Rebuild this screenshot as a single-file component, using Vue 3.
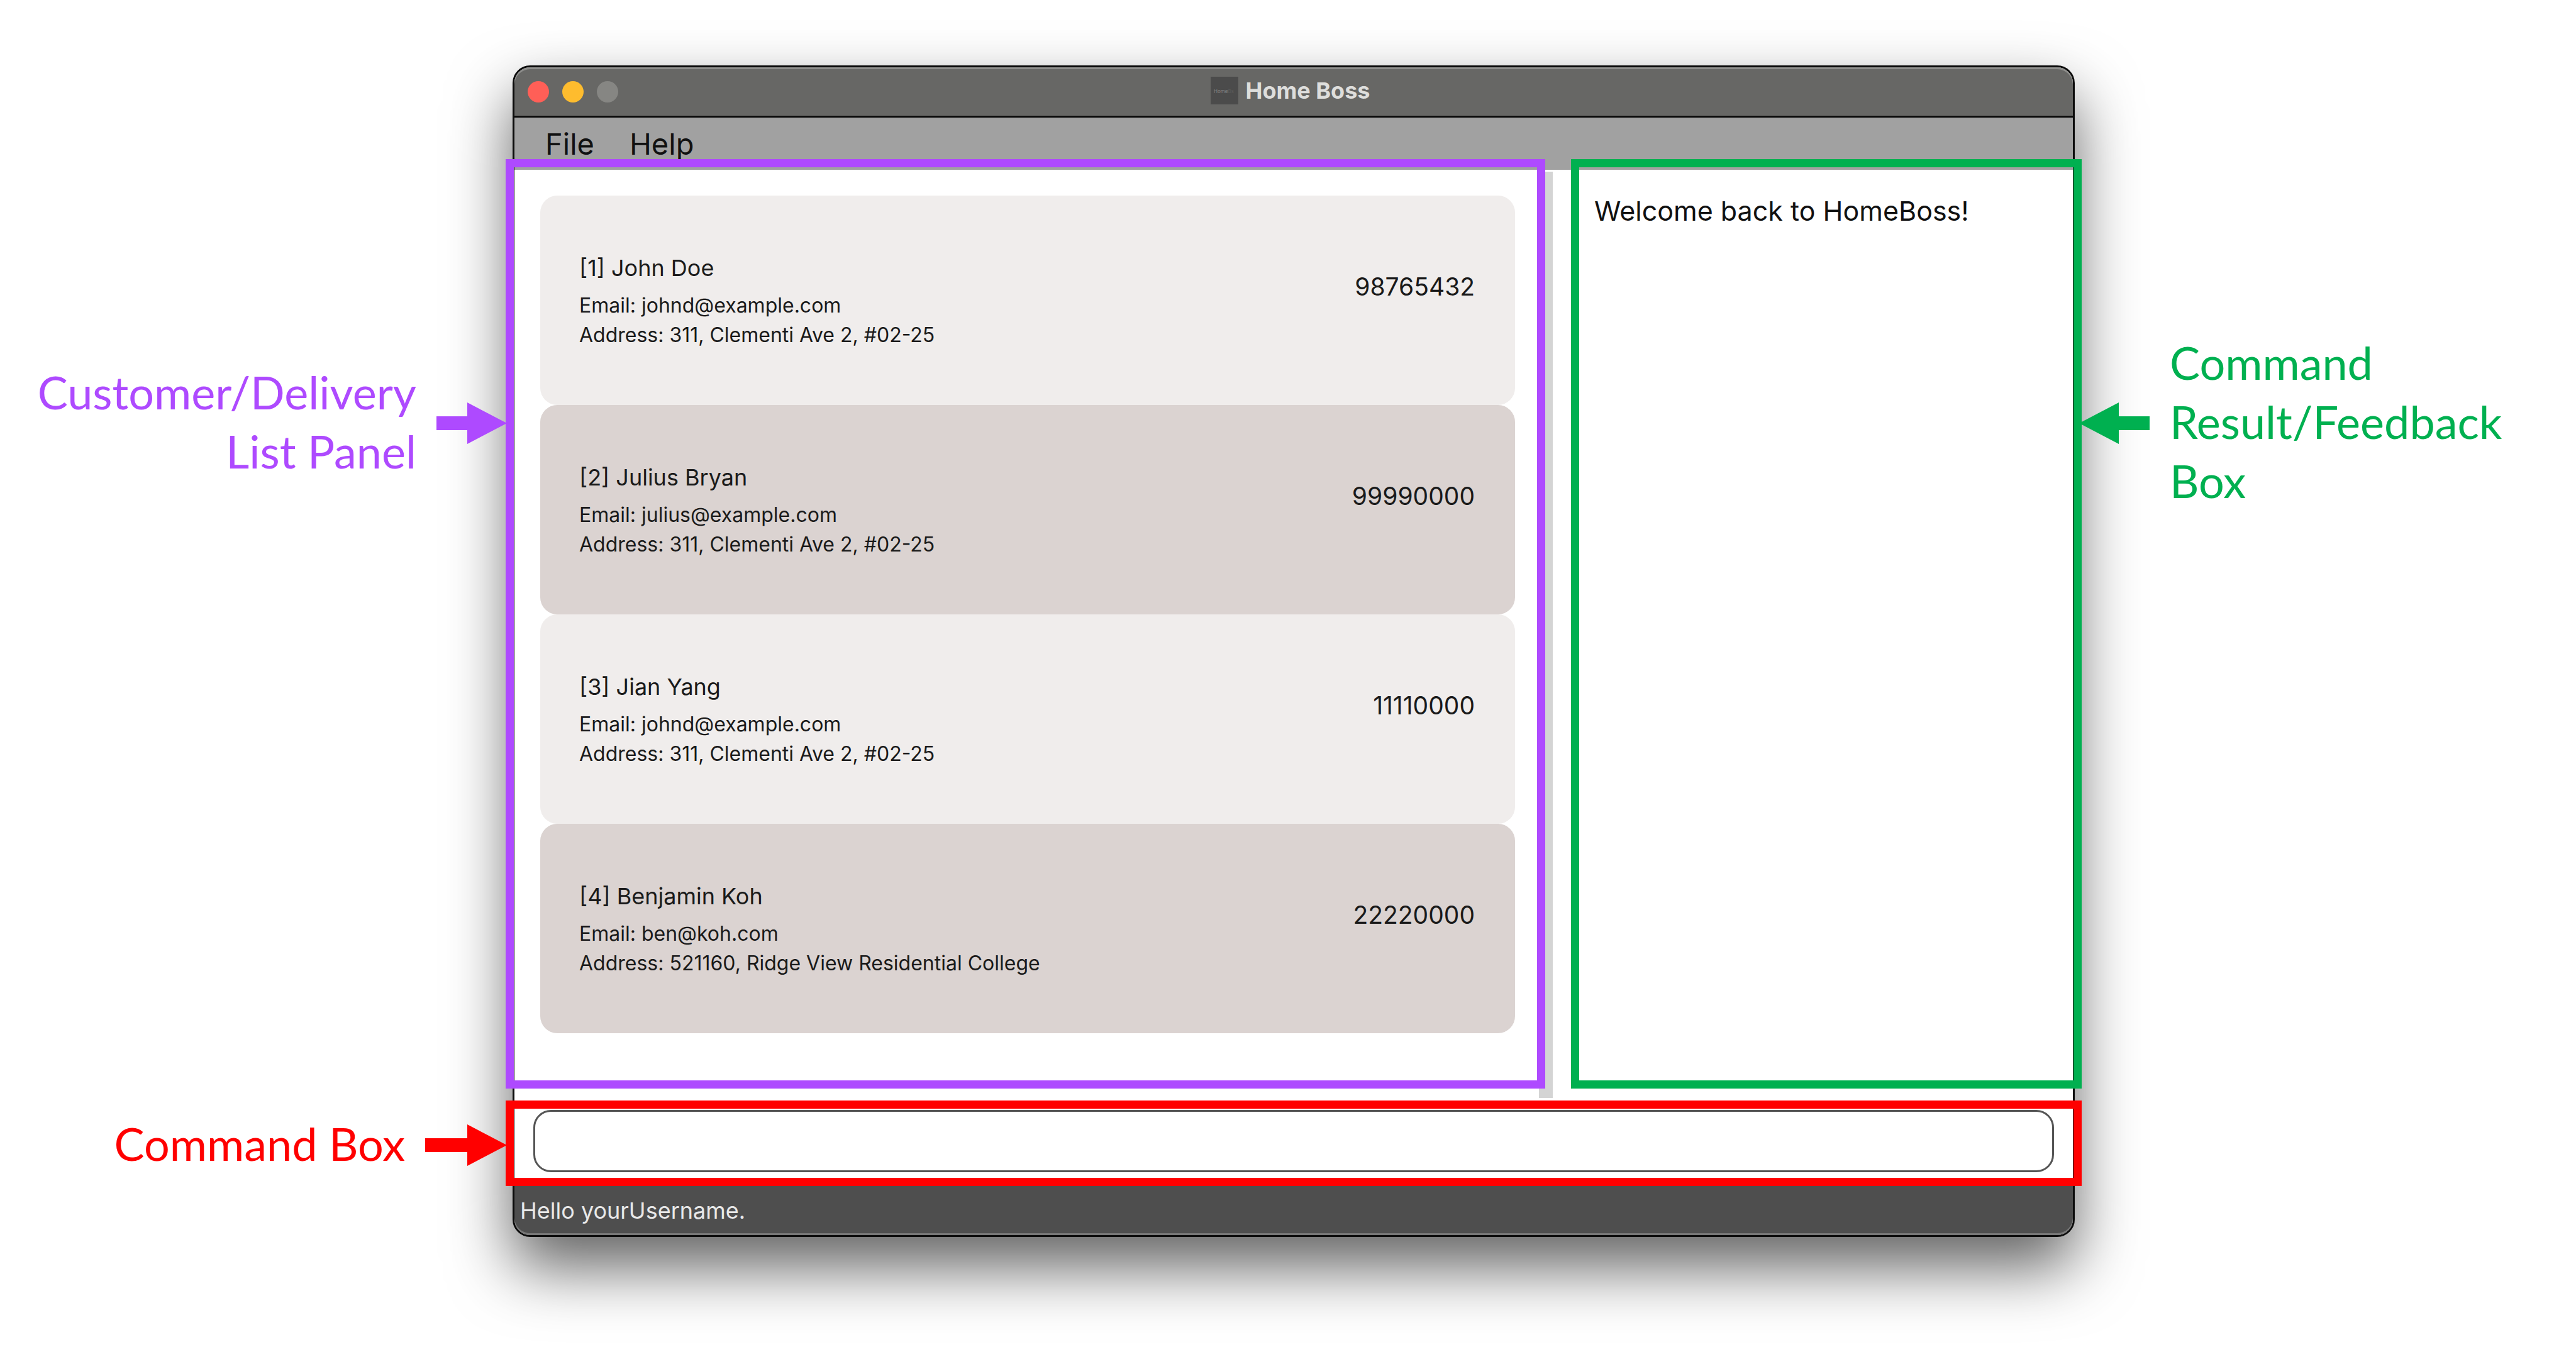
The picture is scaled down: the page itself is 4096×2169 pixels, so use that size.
<script setup>
import { ref } from 'vue'

const command = ref('')
const menus = ['File', 'Help']
const customers = [
  { id: 1, name: 'John Doe', email: 'johnd@example.com', address: '311, Clementi Ave 2, #02-25', phone: '98765432' },
  { id: 2, name: 'Julius Bryan', email: 'julius@example.com', address: '311, Clementi Ave 2, #02-25', phone: '99990000' },
  { id: 3, name: 'Jian Yang', email: 'johnd@example.com', address: '311, Clementi Ave 2, #02-25', phone: '11110000' },
  { id: 4, name: 'Benjamin Koh', email: 'ben@koh.com', address: '521160, Ridge View Residential College', phone: '22220000' }
]
</script>

<template>
  <div class="page">
    <aside class="notes notes-left">
      <div class="note purple">
        <p>Customer/Delivery<br>List Panel</p>
        <svg width="112" height="66" viewBox="0 0 112 66" aria-hidden="true">
          <path d="M0 22H49V0L112 33L49 66V44H0Z" fill="currentColor" />
        </svg>
      </div>
      <div class="note red">
        <p>Command Box</p>
        <svg width="130" height="66" viewBox="0 0 130 66" aria-hidden="true">
          <path d="M0 22H67V0L130 33L67 66V44H0Z" fill="currentColor" />
        </svg>
      </div>
    </aside>

    <main class="window">
      <header class="titlebar">
        <div class="lights">
          <button class="light close" type="button" aria-label="Close"></button>
          <button class="light minimise" type="button" aria-label="Minimise"></button>
          <button class="light zoom" type="button" aria-label="Zoom" disabled></button>
        </div>
        <div class="title">
          <svg width="44" height="44" viewBox="0 0 44 44" aria-hidden="true">
            <rect width="44" height="44" fill="#4b4b4b" />
            <text x="5" y="26" font-family="Inter, sans-serif" font-size="8" fill="#858585">Home<tspan fill="#5a5a5a">Bs</tspan></text>
          </svg>
          <h1>Home Boss</h1>
        </div>
      </header>

      <nav class="menubar">
        <button v-for="menu in menus" :key="menu" type="button">{{ menu }}</button>
      </nav>

      <div class="split">
        <section class="list-panel">
          <ul>
            <li v-for="c in customers" :key="c.id" class="card">
              <div>
                <h2>[{{ c.id }}] {{ c.name }}</h2>
                <p>Email: {{ c.email }}</p>
                <p>Address: {{ c.address }}</p>
              </div>
              <span class="phone">{{ c.phone }}</span>
            </li>
          </ul>
          <span class="frame purple"></span>
        </section>
        <div class="divider"></div>
        <section class="result-panel">
          <output>Welcome back to HomeBoss!</output>
          <span class="frame green"></span>
        </section>
      </div>

      <form class="command-panel" @submit.prevent>
        <input v-model="command" type="text" aria-label="Command">
        <span class="frame red"></span>
      </form>

      <footer class="status">Hello yourUsername.</footer>
    </main>

    <aside class="notes notes-right">
      <div class="note green">
        <svg width="112" height="66" viewBox="0 0 112 66" aria-hidden="true">
          <path d="M112 22H63V0L0 33L63 66V44H112Z" fill="currentColor" />
        </svg>
        <p>Command<br>Result/Feedback<br>Box</p>
      </div>
    </aside>
  </div>
</template>

<style>
body {
  margin: 0;
  background: #fff;
}
</style>

<style scoped>
.page {
  box-sizing: border-box;
  display: grid;
  grid-template-columns: minmax(0, 815fr) minmax(0, 2484fr) minmax(0, 797fr);
  align-items: start;
  min-height: 100vh;
  padding-top: 104px;
  overflow: hidden;
  font-family: Inter, "Liberation Sans", sans-serif;
  color: #1a1a1a;
}

h1, h2, p, ul {
  margin: 0;
  padding: 0;
  font-weight: 400;
}

button {
  border: 0;
  padding: 0;
  background: none;
  font: inherit;
  color: inherit;
}

.purple { color: #ae4aff; }
.green { color: #00b050; }
.red { color: #f00; }

/* Callouts beside the window */
.notes {
  position: relative;
  z-index: 1;
  display: flex;
  flex-direction: column;
  font-family: Lato, "Open Sans", sans-serif;
  font-size: 72px;
  line-height: 94px;
}

.notes-left {
  align-items: flex-end;
  gap: 1001px;
  padding: 472px 9px 0 0;
  text-align: right;
}

.notes-right {
  padding: 425px 0 0 7px;
}

.note {
  display: flex;
  align-items: center;
  gap: 32px;
  white-space: nowrap;
}

.note p {
  padding-bottom: 6px;
}

.note svg {
  flex: none;
}

/* Application window */
.window {
  border: 3px solid #0c0c0c;
  border-radius: 28px;
  background: #fff;
  box-shadow: 0 48px 100px rgba(0, 0, 0, 0.62);
}

.titlebar {
  display: grid;
  grid-template-columns: 1fr auto 1fr;
  align-items: center;
  height: 77px;
  border-bottom: 3px solid #0c0c0c;
  border-radius: 25px 25px 0 0;
  background: #676765;
  box-shadow: inset 0 3px 0 #8e8e8c;
}

.lights {
  display: flex;
  gap: 21px;
  padding-left: 21px;
}

.light {
  width: 34px;
  height: 34px;
  border-radius: 50%;
}

.close { background: #ff5f57; }
.minimise { background: #febc2e; }
.zoom { background: #868683; }

.title {
  display: flex;
  align-items: center;
  gap: 11px;
  padding: 0 10px 4px 0;
}

.title h1 {
  font-size: 36px;
  line-height: 42px;
  font-weight: 700;
  color: #dededc;
}

.menubar {
  display: flex;
  align-items: center;
  gap: 56px;
  height: 83px;
  padding-left: 49px;
  background: #a1a1a1;
  font-size: 47px;
  color: #111;
}

.split {
  display: grid;
  grid-template-columns: minmax(0, 1629fr) 22px minmax(0, 827fr);
  min-height: 1476px;
}

.list-panel,
.result-panel,
.command-panel {
  position: relative;
}

.list-panel {
  padding: 41px 38px 0 41px;
}

.list-panel ul {
  list-style: none;
}

.divider {
  margin-top: 3px;
  background: #d4d4d4;
}

.result-panel {
  padding: 38px 24px 0 66px;
  font-size: 43px;
  line-height: 54px;
  color: #111;
}

.card {
  box-sizing: border-box;
  display: flex;
  justify-content: space-between;
  height: 333px;
  padding: 91px 64px 0 62px;
  border-radius: 27px;
  background: #f0edec;
}

.card:nth-child(even) {
  background: #dbd3d1;
}

.card h2 {
  margin-bottom: 12px;
  font-size: 36px;
  line-height: 48px;
}

.card p {
  font-size: 32px;
  line-height: 47px;
}

.phone {
  padding-top: 30px;
  font-size: 39px;
  line-height: 48px;
}

.command-panel {
  padding: 19px 30px 16px;
}

.command-panel input {
  box-sizing: border-box;
  display: block;
  width: 100%;
  height: 99px;
  padding: 0 28px;
  border: 3px solid #555;
  border-radius: 28px;
  background: #fff;
  font: 36px Inter, sans-serif;
  outline: none;
}

.status {
  height: 84px;
  padding-left: 9px;
  border-radius: 0 0 25px 25px;
  background: #4e4e4e;
  box-shadow: inset 0 -3px 0 #777;
  font-size: 36px;
  line-height: 90px;
  color: #e8e8e8;
}

/* Coloured outlines drawn over each area */
.frame {
  position: absolute;
  border: 13px solid currentColor;
  pointer-events: none;
}

.list-panel .frame { inset: -17px -10px 15px -14px; z-index: 1; }
.result-panel .frame { inset: -17px -14px 15px 29px; }
.command-panel .frame { inset: 4px -14px -6px -14px; }
</style>
